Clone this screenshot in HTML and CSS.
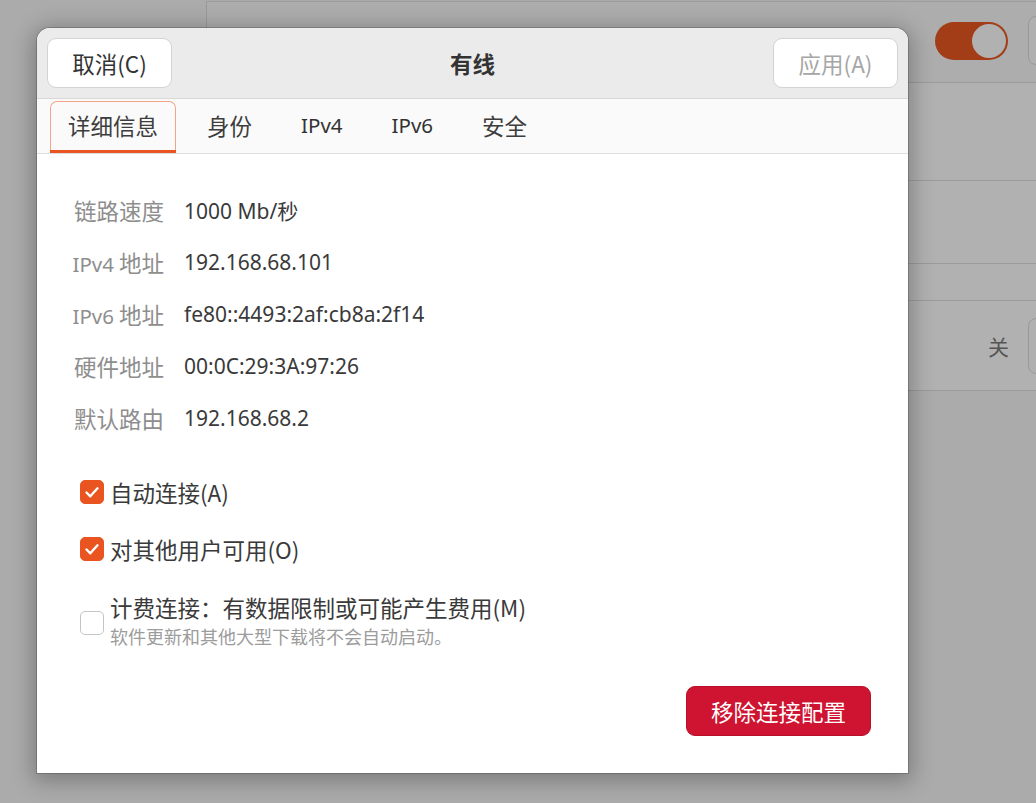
FILE: index.html
```html
<!DOCTYPE html>
<html lang="zh-CN">
<head>
<meta charset="utf-8">
<title>有线</title>
<link rel="stylesheet" href="styles.css">
</head>
<body>
<div class="bgwin">
  <div class="bg-top">
    <div class="toggle"><span class="knob"></span></div>
    <div class="bg-btn bg-btn-top"></div>
  </div>
  <div class="bg-row r1"></div>
  <div class="bg-row r2"></div>
  <div class="bg-row r3"></div>
  <div class="bg-row r4">
    <span class="off">关</span>
    <div class="bg-btn bg-btn-row"></div>
  </div>
</div>

<div class="dialog">
  <div class="header">
    <button class="hbtn">取消(C)</button>
    <div class="title">有线</div>
    <button class="hbtn disabled">应用(A)</button>
  </div>
  <div class="tabs">
    <div class="tab active"><span class="tab-in">详细信息</span></div>
    <div class="tab"><span class="tab-in">身份</span></div>
    <div class="tab"><span class="tab-in latin">IPv4</span></div>
    <div class="tab"><span class="tab-in latin">IPv6</span></div>
    <div class="tab"><span class="tab-in">安全</span></div>
  </div>
  <div class="content">
    <div class="info">
      <div class="lbl">链路速度</div><div class="val">1000 Mb/秒</div>
      <div class="lbl"><span class="lat">IPv4</span> 地址</div><div class="val">192.168.68.101</div>
      <div class="lbl"><span class="lat">IPv6</span> 地址</div><div class="val">fe80::4493:2af:cb8a:2f14</div>
      <div class="lbl">硬件地址</div><div class="val">00:0C:29:3A:97:26</div>
      <div class="lbl">默认路由</div><div class="val">192.168.68.2</div>
    </div>
    <div class="checks">
      <div class="check">
        <span class="box on"><svg viewBox="0 0 24 24" width="24" height="24"><path d="M6.5 12.5l3.8 3.8 7.2-8" fill="none" stroke="#fff" stroke-width="2.4" stroke-linecap="round" stroke-linejoin="round"/></svg></span>
        <span class="clabel">自动连接(A)</span>
      </div>
      <div class="check">
        <span class="box on"><svg viewBox="0 0 24 24" width="24" height="24"><path d="M6.5 12.5l3.8 3.8 7.2-8" fill="none" stroke="#fff" stroke-width="2.4" stroke-linecap="round" stroke-linejoin="round"/></svg></span>
        <span class="clabel">对其他用户可用(O)</span>
      </div>
      <div class="check third">
        <span class="box"></span>
        <div class="ctext">
          <div class="clabel">计费连接：有数据限制或可能产生费用(M)</div>
          <div class="csub">软件更新和其他大型下载将不会自动启动。</div>
        </div>
      </div>
    </div>
    <div class="actions">
      <button class="remove">移除连接配置</button>
    </div>
  </div>
</div>
</body>
</html>
```

FILE: styles.css
```css
* { box-sizing: border-box; }

html, body {
  margin: 0;
  padding: 0;
  width: 1036px;
  height: 803px;
  overflow: hidden;
}

body {
  background: #ababab;
  font-family: "Noto Sans", "Noto Sans CJK SC", sans-serif;
  color: #3d3d3d;
  position: relative;
}

/* background window */
.bgwin {
  margin-left: 206px;
  width: 880px;
  margin-top: 1px;
}

.bg-top {
  height: 82px;
  border-left: 1px solid #999;
  border-top: 1px solid #9c9c9c;
  border-bottom: 1px solid #9b9b9b;
  display: flex;
  align-items: center;
  justify-content: flex-end;
  padding-right: 2px;
  padding-bottom: 3px;
  background: #adadad;
}

.toggle {
  width: 73px;
  height: 38px;
  border-radius: 19px;
  background: #a33d17;
  display: flex;
  align-items: center;
  justify-content: flex-end;
  padding-right: 2px;
  margin-right: 20px;
}

.knob {
  width: 34px;
  height: 34px;
  border-radius: 50%;
  background: #b1b1b1;
}

.bg-btn {
  width: 56px;
  border: 1px solid #999;
  border-radius: 8px;
  background: #b0b0b0;
}

.bg-btn-top { height: 49px; }
.bg-btn-row { height: 56px; }

.bg-row {
  border-bottom: 1px solid #9b9b9b;
  background: #b1b1b1;
}

.r1 { height: 98px; }
.r2 { height: 83px; }
.r3 { height: 37px; }
.r4 {
  height: 90px;
  display: flex;
  align-items: center;
  justify-content: flex-end;
  padding-right: 2px;
}

.off {
  font-size: 21px;
  color: #555;
  margin-right: 19px;
  font-family: "Noto Sans CJK SC", sans-serif;
}

/* dialog */
.dialog {
  position: absolute;
  left: 37px;
  top: 28px;
  width: 871px;
  height: 745px;
  background: #fff;
  border-radius: 13px 13px 0 0;
  box-shadow: 0 0 0 1px rgba(0,0,0,0.18), 0 4px 22px 4px rgba(0,0,0,0.28);
  display: flex;
  flex-direction: column;
  overflow: hidden;
}

.header {
  height: 71px;
  background: #ebebeb;
  border-bottom: 1px solid #d8d8d8;
  display: flex;
  align-items: center;
  justify-content: space-between;
  padding: 0 10px 1px 10px;
}

.hbtn {
  width: 125px;
  height: 50px;
  background: #fff;
  border: 1px solid #d3d3d3;
  border-radius: 9px;
  font-family: "Noto Sans CJK SC", sans-serif;
  font-size: 22.5px;
  color: #333;
  padding: 0;
}

.hbtn.disabled { color: #a6a6a6; }

.title {
  font-family: "Noto Sans CJK SC", sans-serif;
  font-weight: bold;
  font-size: 22.5px;
  color: #333;
}

.tabs {
  height: 55px;
  background: #fafafa;
  border-bottom: 1px solid #dedede;
  display: flex;
  gap: 13px;
  padding-left: 13px;
}

.tab {
  height: 54px;
  padding-top: 2px;
  border-bottom: 3px solid transparent;
  display: flex;
}

.tab.active { border-bottom-color: #e95420; }

.tab-in {
  display: flex;
  align-items: center;
  padding: 0 17px 2px 17px;
  font-family: "Noto Sans CJK SC", sans-serif;
  font-size: 22.5px;
  color: #3d3d3d;
  border: 1px solid transparent;
  border-radius: 7px 7px 0 0;
  height: 49px;
}

.tab-in.latin {
  font-family: "Noto Sans", sans-serif;
  font-size: 20.5px;
  color: #333;
}

.tab.active .tab-in {
  border-color: #f2a488;
  border-bottom: none;
}

.content {
  flex: 1;
  display: flex;
  flex-direction: column;
  padding: 30px 37px 37px 30px;
}

.info {
  display: grid;
  grid-template-columns: 97px auto;
  column-gap: 20px;
  grid-auto-rows: 52px;
  align-items: center;
}

.lbl {
  text-align: right;
  font-family: "Noto Sans CJK SC", sans-serif;
  font-size: 22.5px;
  color: #8e8e8e;
}

.lbl .lat {
  font-family: "Noto Sans", sans-serif;
  font-size: 20.5px;
}

.val {
  font-size: 21px;
  color: #3a3a3a;
}

.checks {
  margin-top: 28px;
  display: flex;
  flex-direction: column;
  gap: 17px;
}

.check {
  display: flex;
  align-items: center;
  height: 40px;
  padding-left: 13px;
  gap: 6px;
}

.check.third {
  height: auto;
  margin-top: 6px;
}

.box {
  width: 24px;
  height: 24px;
  border-radius: 5px;
  border: 1px solid #c4c4c4;
  background: #fff;
  flex: none;
  display: flex;
}

.box.on {
  background: #e95420;
  border-color: #e95420;
}

.box svg { margin: -1px; }

.clabel {
  font-family: "Noto Sans CJK SC", sans-serif;
  font-size: 22.5px;
  color: #3a3a3a;
  line-height: 30px;
}

.third .box { margin-top: 4px; }

.csub {
  font-family: "Noto Sans CJK SC", sans-serif;
  font-size: 18px;
  color: #9c9c9c;
  line-height: 28px;
}

.actions {
  margin-top: auto;
  display: flex;
  justify-content: flex-end;
}

.remove {
  width: 185px;
  height: 50px;
  background: #ce1430;
  border: 1px solid #b8102a;
  border-radius: 9px;
  color: #fff;
  font-family: "Noto Sans CJK SC", sans-serif;
  font-size: 22.5px;
  padding: 0;
}
```
